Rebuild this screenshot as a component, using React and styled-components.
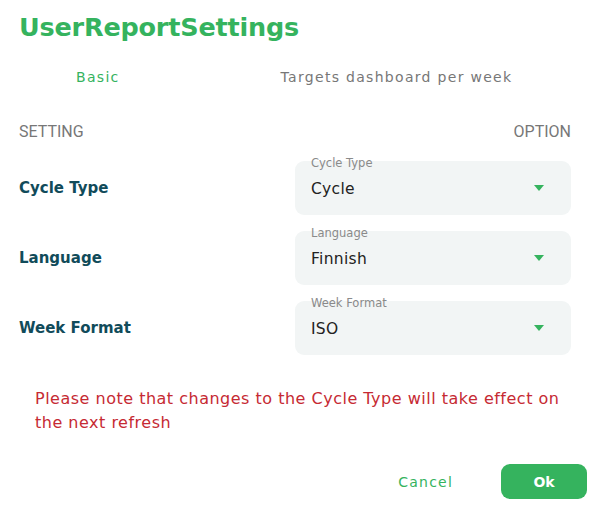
import React from 'react'
import styled, { createGlobalStyle } from 'styled-components'

const GlobalStyle = createGlobalStyle`
  body {
    margin: 0;
    background: #fff;
    font-family: 'DejaVu Sans', 'Noto Sans', sans-serif;
  }
`

const FONT = `'DejaVu Sans', 'Noto Sans', sans-serif`

const Dialog = styled.div`
  width: 592px;
  height: 506px;
  box-sizing: border-box;
  padding: 10px 21px 0 19px;
  display: flex;
  flex-direction: column;
`

const Title = styled.h1`
  margin: 0;
  font-family: ${FONT};
  font-size: 25.5px;
  font-weight: 600;
  color: #35b35e;
  line-height: 34px;
  letter-spacing: -0.2px;
`

const Tabs = styled.div`
  display: flex;
  margin-top: 18px;
  height: 30px;
  align-items: center;
`

const Tab = styled.div`
  font-family: ${FONT};
  font-size: 14px;
  letter-spacing: 1.3px;
  color: ${p => (p.active ? '#35b35e' : '#777')};
  padding: 0 ${p => p.pad || 0}px 0 ${p => p.left || 0}px;
`

const HeaderRow = styled.div`
  display: flex;
  justify-content: space-between;
  margin-top: 30px;
  font-family: 'Roboto', sans-serif;
  font-size: 16px;
  color: #777;
  line-height: 20px;
`

const Rows = styled.div`
  display: flex;
  flex-direction: column;
  gap: 16px;
  margin-top: 19px;
`

const Row = styled.div`
  display: flex;
  align-items: center;
  justify-content: space-between;
`

const RowLabel = styled.div`
  font-family: ${FONT};
  font-size: 15px;
  font-weight: 600;
  color: #114b5a;
`

const Select = styled.div`
  position: relative;
  width: 276px;
  height: 54px;
  box-sizing: border-box;
  border-radius: 9px;
  background: #f2f5f5;
  display: flex;
  align-items: center;
  padding: 0 27px 0 16px;
`

const FloatLabel = styled.span`
  position: absolute;
  left: 16px;
  top: -5px;
  font-family: ${FONT};
  font-size: 11.5px;
  color: #8a8a8a;
`

const Value = styled.span`
  flex: 1;
  margin-top: 1px;
  font-family: ${FONT};
  font-size: 15.5px;
  letter-spacing: 0.3px;
  color: #222;
`

const Note = styled.p`
  margin: 32px 0 0 16px;
  font-family: ${FONT};
  font-size: 16px;
  line-height: 24px;
  letter-spacing: 0.5px;
  color: #c62a33;
`

const Actions = styled.div`
  display: flex;
  justify-content: flex-end;
  align-items: center;
  margin: 29px -16px 0 0;
  gap: 48px;
`

const TextButton = styled.button`
  border: none;
  background: none;
  font-family: ${FONT};
  font-size: 14px;
  letter-spacing: 1.2px;
  color: #35b35e;
  padding: 0;
  cursor: pointer;
`

const PrimaryButton = styled.button`
  border: none;
  width: 86px;
  height: 35px;
  border-radius: 9px;
  background: #35b35e;
  color: #fff;
  font-family: ${FONT};
  font-size: 14px;
  font-weight: 600;
  cursor: pointer;
`

const Caret = () => (
  <svg width="10" height="6" viewBox="0 0 10 6">
    <path d="M0 0h10L5 6z" fill="#35b35e" />
  </svg>
)

const settings = [
  { label: 'Cycle Type', value: 'Cycle' },
  { label: 'Language', value: 'Finnish' },
  { label: 'Week Format', value: 'ISO' },
]

export default function App() {
  return (
    <>
      <GlobalStyle />
      <Dialog>
        <Title>UserReportSettings</Title>
        <Tabs>
          <Tab active left={57} pad={161}>Basic</Tab>
          <Tab>Targets dashboard per week</Tab>
        </Tabs>
        <HeaderRow>
          <span>SETTING</span>
          <span>OPTION</span>
        </HeaderRow>
        <Rows>
          {settings.map(s => (
            <Row key={s.label}>
              <RowLabel>{s.label}</RowLabel>
              <Select>
                <FloatLabel>{s.label}</FloatLabel>
                <Value>{s.value}</Value>
                <Caret />
              </Select>
            </Row>
          ))}
        </Rows>
        <Note>
          Please note that changes to the Cycle Type will take effect on the next refresh
        </Note>
        <Actions>
          <TextButton>Cancel</TextButton>
          <PrimaryButton>Ok</PrimaryButton>
        </Actions>
      </Dialog>
    </>
  )
}
